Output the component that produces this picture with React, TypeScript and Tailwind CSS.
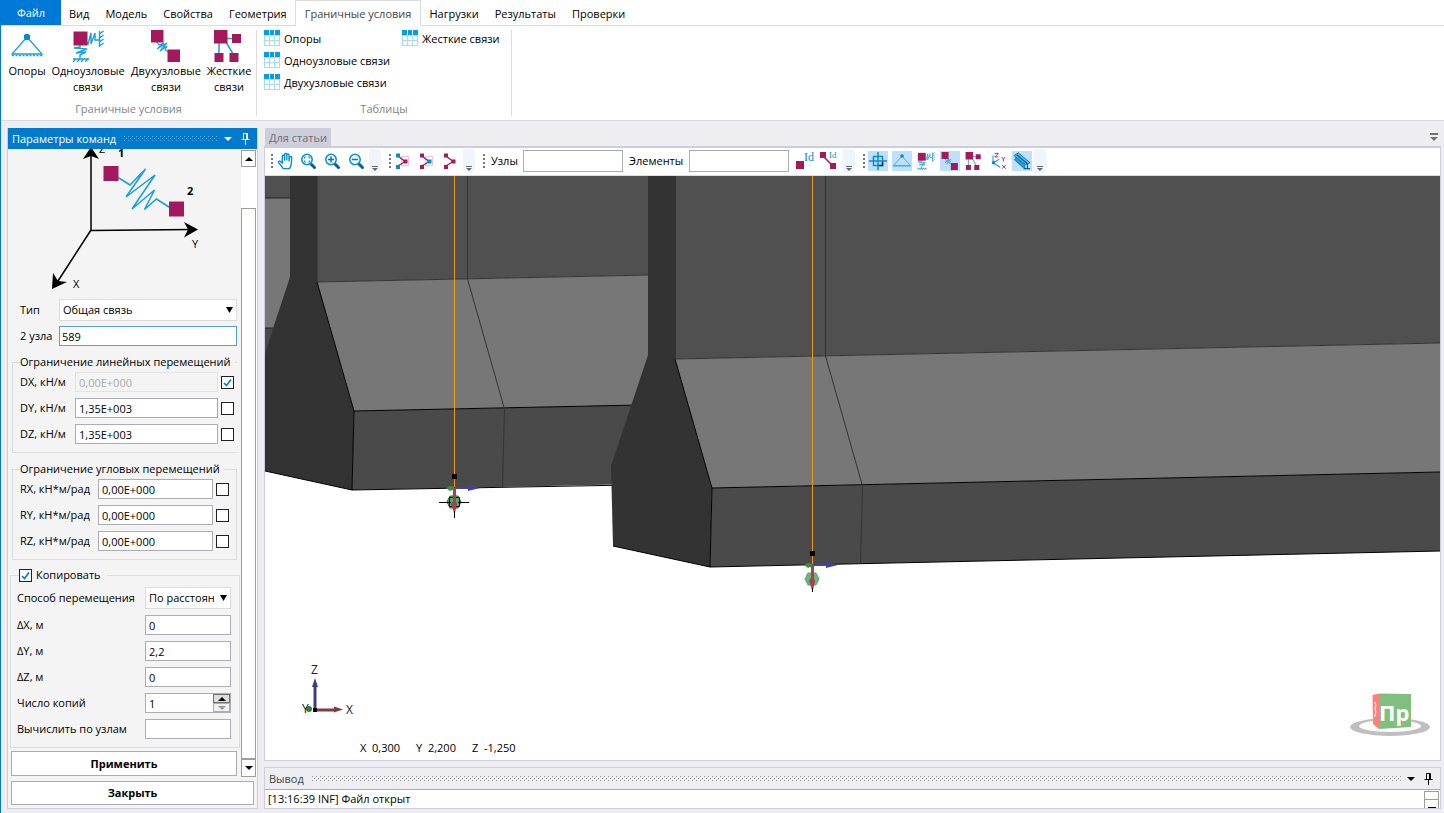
import { useState, type ReactNode } from 'react'
import clsx from 'clsx'

const MENU = ['Вид', 'Модель', 'Свойства', 'Геометрия', 'Граничные условия', 'Нагрузки', 'Результаты', 'Проверки']

export default function App() {
  const [tab, setTab] = useState('Граничные условия')

  return (
    <div className="flex h-screen flex-col overflow-hidden border-l border-[#0078d7] bg-[#eeeef2] font-['Open_Sans','Noto_Sans',sans-serif] text-[11px] leading-4 text-black">
      <nav className="flex h-[26px] shrink-0 border-b border-[#dadbdc] bg-white">
        <button className="h-[25px] w-[60px] bg-[#0078d7] text-white">Файл</button>
        {MENU.map((name) => (
          <button
            key={name}
            onClick={() => setTab(name)}
            className={clsx(
              'h-[26px] whitespace-nowrap pt-px',
              name === tab ? 'border border-b-0 border-[#dadbdc] bg-white px-[9px] text-[#444]' : 'px-2',
            )}
          >
            {name}
          </button>
        ))}
      </nav>

      <Ribbon />

      <div className="flex min-h-0 flex-1 gap-1.5 pb-1 pl-1.5 pr-[3px] pt-[7px]">
        <CommandPanel />
        <div className="flex min-w-0 flex-1 flex-col">
          <Workspace />
          <Output />
        </div>
      </div>
    </div>
  )
}

// ─── Ribbon ───────────────────────────────────────────────────────────────────

function Ribbon() {
  return (
    <section className="flex h-[95px] shrink-0 border-b border-[#dadbdc] bg-white pt-1">
      <div className="flex h-[86px] w-[256px] flex-col justify-between border-r border-[#dadbdc]">
        <div className="flex pl-[5px]">
          <BigButton width="w-[42px]" lines={['Опоры']} icon={<SupportIcon />} />
          <BigButton width="w-[80px]" lines={['Одноузловые', 'связи']} icon={<OneNodeIcon />} />
          <BigButton width="w-[76px]" lines={['Двухузловые', 'связи']} icon={<TwoNodeIcon />} />
          <BigButton width="w-[50px]" lines={['Жесткие', 'связи']} icon={<RigidIcon />} />
        </div>
        <GroupLabel>Граничные условия</GroupLabel>
      </div>
      <div className="flex h-[86px] w-[255px] flex-col justify-between border-r border-[#dadbdc]">
        <div className="flex gap-2 pl-[7px]">
          <div className="flex w-[130px] flex-col gap-1.5">
            <TableButton label="Опоры" />
            <TableButton label="Одноузловые связи" />
            <TableButton label="Двухузловые связи" />
          </div>
          <div>
            <TableButton label="Жесткие связи" />
          </div>
        </div>
        <GroupLabel>Таблицы</GroupLabel>
      </div>
    </section>
  )
}

function GroupLabel({ children }: { children: ReactNode }) {
  return <div className="text-center leading-[14px] text-[#848484]">{children}</div>
}

function BigButton({ lines, icon, width }: { lines: string[]; icon: ReactNode; width: string }) {
  return (
    <button className={clsx('flex flex-col items-center', width)}>
      <span className="block size-8">{icon}</span>
      {lines.map((l) => (
        <span key={l} className="whitespace-nowrap pt-px leading-[15px]">
          {l}
        </span>
      ))}
    </button>
  )
}

function TableButton({ label }: { label: string }) {
  return (
    <button className="flex h-4 items-center gap-1 whitespace-nowrap">
      <svg viewBox="0 0 16 16" className="size-4 shrink-0">
        <path d="M0 5h16v11H0z" fill="#a5dcf6" />
        <path d="M1 6h4v4H1zM6 6h4v4H6zM11 6h4v4h-4zM1 11h4v4H1zM6 11h4v4H6zM11 11h4v4h-4z" fill="#fff" />
        <path d="M0 0h5v5H0zM6 0h4v5H6zM11 0h5v5h-5z" fill="#049fe3" />
      </svg>
      <span className="pt-0.5">{label}</span>
    </button>
  )
}

// ─── Icons ────────────────────────────────────────────────────────────────────

function SupportIcon() {
  return (
    <svg viewBox="0 0 32 32" className="size-full" fill="none" stroke="#1a9fe0">
      <path d="M16 7L1 24h30z" strokeWidth="1.300" />
      <path d="M1 25.500h30" strokeWidth="1.500" strokeDasharray="2 1.500" />
      <circle cx="16" cy="7" r="3.200" fill="#0a86c8" stroke="none" />
    </svg>
  )
}

function OneNodeIcon() {
  return (
    <svg viewBox="0 0 32 32" className="size-full" fill="none" stroke="#1a9fe0" strokeWidth="1.400">
      <path d="M15 12l1 2 3-11v11l4-11v7h4M27.500 1v16M27.500 4l4-3M27.500 8l4-3M27.500 12l4-3M27.500 16l4-3" />
      <path d="M8 15v2l-6 1 13 1-11 4 10-1-6 3v4M1 29h16M1 32l3-3M5 32l3-3M9 32l3-3M13 32l3-3" />
      <path d="M1.500 1.500h14v14h-14z" fill="#a3195b" stroke="none" />
    </svg>
  )
}

function TwoNodeIcon() {
  return (
    <svg viewBox="0 0 32 32" className="size-full" fill="none">
      <path d="M7 12l2 3 5-2-7 6 10-6-7 8 7-5-2 4 4 2" stroke="#1a9fe0" strokeWidth="1.200" />
      <path d="M1 0h12.500v12.500H1zM17.500 19.500H30V32H17.500z" fill="#a3195b" />
    </svg>
  )
}

function RigidIcon() {
  return (
    <svg viewBox="0 0 32 32" className="size-full" fill="none">
      <path d="M6 13v11M13 8.500h8M13 12l7 12" stroke="#1a9fe0" strokeWidth="1.500" />
      <path d="M1 0h13.500v13.500H1zM19 4h9v9h-9zM1.500 23h9v9h-9zM16.500 23h9v9h-9z" fill="#a3195b" />
    </svg>
  )
}

function HandIcon() {
  return (
    <svg viewBox="0 0 20 20" className="size-full" fill="#fff" stroke="#078bd0" strokeWidth="1.500" strokeLinejoin="round">
      <path d="M8 18.500c-1-2-3-4-5-6.500-1-1.500 1-2.500 2-1.500l2 2V5c0-1.800 2.500-1.800 2.500 0v4-6c0-1.800 2.500-1.800 2.500 0v6-5.500c0-1.800 2.500-1.800 2.500 0V10l.6-4c.2-1.700 2.400-1.400 2.400.2L17 13c-.3 2.500-1 4-2 5.500z" />
    </svg>
  )
}

function ZoomIcon({ kind }: { kind: 'fit' | 'in' | 'out' }) {
  return (
    <svg viewBox="0 0 18 18" className="size-full" fill="none">
      <path d="M11 12l3.500 3.500" stroke="#085fa5" strokeWidth="3" strokeLinecap="round" />
      <circle cx="7" cy="7.500" r="5.200" fill="#fff" stroke="#0d95d8" strokeWidth="1.600" />
      {kind === 'fit' && <path d="M4.500 6.500V5H6M8 5h1.500v1.500M9.500 8.500V10H8M6 10H4.500V8.500" stroke="#0d95d8" />}
      {kind !== 'fit' && <path d="M4 7.500h6" stroke="#0878be" strokeWidth="1.600" />}
      {kind === 'in' && <path d="M7 4.500v6" stroke="#0878be" strokeWidth="1.600" />}
    </svg>
  )
}

function SelectIcon({ colors }: { colors: [string, string, string] }) {
  const [top, mid, bottom] = colors
  return (
    <svg viewBox="0 0 18 18" className="size-full" fill="none">
      <path d="M7.500 4.500h7v9h-7z" stroke="#d48bae" strokeDasharray="1 1" />
      <path d="M4 4l7 5.500L4 14" stroke="#a3195b" strokeWidth="1.300" />
      <path d="M2 1.500h4v4H2z" fill={top} />
      <path d="M9.500 7.500h4v4h-4z" fill={mid} />
      <path d="M2 13h4v4H2z" fill={bottom} />
    </svg>
  )
}

function AxesIcon() {
  return (
    <svg viewBox="0 0 20 20" className="size-full" fill="none">
      <path d="M4.500 4v8l8 5M4.500 12l7-4" stroke="#1a9fe0" strokeWidth="1.200" />
      <circle cx="5" cy="12" r="2" fill="#078bd0" />
      <path d="M6.500 1.500h4l-4 4h4M14 5.500l2 2.500 2-2.500M16 8v2.500M14.500 14.500l4 4M18.500 14.500l-4 4" stroke="#a3195b" />
    </svg>
  )
}

function BeamIcon() {
  return (
    <svg viewBox="0 0 20 20" className="size-full" fill="none">
      <path d="M1 4l5-3 13 11-5 2z" fill="#5cb8ea" stroke="#0775b5" />
      <path d="M3 6v3l10 9v-4zM1 8l11 10" fill="#2da4e0" stroke="#0775b5" />
      <path d="M4 3l12 10M16 13v5M12 18.500h7" stroke="#0a5f9b" strokeWidth="1.300" />
    </svg>
  )
}

function PinIcon() {
  return (
    <svg viewBox="0 0 9 12" className="h-3 w-[9px]" fill="none" stroke="currentColor">
      <path d="M2.500 .5h4v6h-4zM5.500 1v5M.5 6.500h8M4.500 7v5" />
    </svg>
  )
}

function Triangle({ up }: { up?: boolean }) {
  return (
    <svg viewBox="0 0 8 4" className="h-1 w-2" fill="currentColor">
      <path d={up ? 'M0 4l4-4 4 4z' : 'M0 0h8L4 4z'} />
    </svg>
  )
}

function DotStrip({ id, color }: { id: string; color: string }) {
  return (
    <svg className="h-[6px] min-w-0 flex-1">
      <pattern id={id} width="4" height="4" patternUnits="userSpaceOnUse">
        <path d="M0 0h1v1H0zM2 2h1v1H2z" fill={color} />
      </pattern>
      <rect width="100%" height="100%" fill={`url(#${id})`} />
    </svg>
  )
}

// ─── Command parameters ───────────────────────────────────────────────────────

function CommandPanel() {
  return (
    <aside className="flex w-[251px] shrink-0 flex-col border border-t-0 border-[#cccedb] bg-[#f4f4f4]">
      <header className="flex h-[21px] shrink-0 items-center bg-[#007acc] pl-1 pr-[7px] text-white">
        <h2 className="mr-2">Параметры команд</h2>
        <DotStrip id="dots-title" color="#59a8de" />
        <button aria-label="Меню панели" className="ml-1.5 mr-[9px]">
          <Triangle />
        </button>
        <button aria-label="Закрепить">
          <PinIcon />
        </button>
      </header>

      <div className="flex min-h-0 flex-1">
        <form className="min-w-0 flex-1 overflow-hidden" onSubmit={(e) => e.preventDefault()}>
          <SpringDiagram />
          <div className="flex flex-col gap-[5px] pl-3 pr-1">
            <div className="flex h-[22px] items-center">
              <label htmlFor="type" className="w-[39px]">Тип</label>
              <Select id="type" options={['Общая связь']} />
            </div>
            <div className="flex h-5 items-center">
              <label htmlFor="nodes2" className="w-[39px] whitespace-nowrap">2 узла</label>
              <input
                id="nodes2"
                defaultValue="589"
                className="h-5 min-w-0 flex-1 border border-[#569de5] bg-white px-0.5 outline-none"
              />
            </div>
          </div>

          <Group title="Ограничение линейных перемещений" open>
            <Stiffness id="dx" label="DX, кН/м" value="0,00E+000" fixed />
            <Stiffness id="dy" label="DY, кН/м" value="1,35E+003" />
            <Stiffness id="dz" label="DZ, кН/м" value="1,35E+003" />
          </Group>
          <Group title="Ограничение угловых перемещений">
            <Stiffness id="rx" label="RX, кН*м/рад" value="0,00E+000" angular />
            <Stiffness id="ry" label="RY, кН*м/рад" value="0,00E+000" angular />
            <Stiffness id="rz" label="RZ, кН*м/рад" value="0,00E+000" angular />
          </Group>

          <fieldset className="ml-0.5 mr-px mt-[7px] min-w-0 border border-[#dcdcdc] pb-2 pl-1.5 pr-2">
            <legend className="ml-0.5 h-4 pr-1.5">
              <label className="flex items-center gap-1">
                <Check label="Копировать" checked />
                Копировать
              </label>
            </legend>
            <div className="flex flex-col gap-1.5 pt-1">
              <CopyRow id="method" label="Способ перемещения">
                <Select id="method" options={['По расстоянию']} />
              </CopyRow>
              <CopyRow id="cx" label="ΔX, м">
                <TextBox id="cx" value="0" />
              </CopyRow>
              <CopyRow id="cy" label="ΔY, м">
                <TextBox id="cy" value="2,2" />
              </CopyRow>
              <CopyRow id="cz" label="ΔZ, м">
                <TextBox id="cz" value="0" />
              </CopyRow>
              <CopyRow id="count" label="Число копий">
                <TextBox id="count" value="1" />
                <span className="absolute right-px top-px flex h-[18px] w-[17px] flex-col">
                  <button aria-label="Больше" className="flex flex-1 items-center justify-center border border-[#707070] bg-[#ddd]">
                    <Triangle up />
                  </button>
                  <button aria-label="Меньше" disabled className="flex flex-1 items-center justify-center border border-[#adadad] bg-[#f0f0f0] text-[#999]">
                    <Triangle />
                  </button>
                </span>
              </CopyRow>
              <CopyRow id="calc" label="Вычислить по узлам">
                <TextBox id="calc" value="" />
              </CopyRow>
            </div>
          </fieldset>
          <div className="pl-[3px] pr-1 pt-[3px]">
            <button className="h-[25px] w-full border border-[#acacac] bg-white font-bold">Применить</button>
          </div>
        </form>

        <div className="flex w-4 shrink-0 flex-col border-r border-white bg-white pt-px">
          <button aria-label="Вверх" className="flex h-[17px] items-center justify-center border border-[#a09d92]">
            <Triangle up />
          </button>
          <div className="h-[41px]" />
          <div className="flex-1 border border-[#a09d92]" />
          <button aria-label="Вниз" className="flex h-[18px] items-center justify-center border border-[#a09d92]">
            <Triangle />
          </button>
        </div>
      </div>

      <div className="px-[3px] pb-[3px] pt-1">
        <button className="h-6 w-full border border-[#acacac] bg-white font-bold">Закрыть</button>
      </div>
    </aside>
  )
}

function SpringDiagram() {
  return (
    <svg viewBox="8 149 233 150" className="block h-[150px] w-full">
      <path d="M91 230.500V152M91 230.500l100-1M91 230L58 281" stroke="#000" strokeWidth="1.500" fill="none" />
      <path d="M91 147l8 12-8-3-8 3zM198 229.500l-14 8 4-8-4-7.500zM52 289l1-16 5 8 9 1z" />
      <path d="M118 177.500l12 7.500 15.500-16-19.500 28 29-22-23 34 22.500-19-10 19.500 12-10.500 14 9" stroke="#139fe0" strokeWidth="1.500" fill="none" />
      <path d="M103.500 166h15v15h-15zM169 201.500h15v15h-15z" fill="#a3195b" />
      <g className="text-[11px]">
        <text x="99" y="153">Z</text>
        <text x="118" y="157" className="font-bold">1</text>
        <text x="187" y="195" className="font-bold">2</text>
        <text x="192" y="248">Y</text>
        <text x="73" y="288">X</text>
      </g>
    </svg>
  )
}

function Group({ title, open, children }: { title: string; open?: boolean; children: ReactNode }) {
  return (
    <fieldset className={clsx('mx-1 mt-2 min-w-0 border border-[#dcdcdc] pb-2 pl-[7px]', open && 'border-r-0')}>
      <legend className="h-4 whitespace-nowrap pr-1">{title}</legend>
      <div className="flex flex-col gap-1.5 pt-0.5">{children}</div>
    </fieldset>
  )
}

function Stiffness({ id, label, value, fixed, angular }: {
  id: string
  label: string
  value: string
  fixed?: boolean
  angular?: boolean
}) {
  return (
    <div className="flex h-5 items-center">
      <label htmlFor={id} className={clsx('whitespace-nowrap', angular ? 'w-[78px]' : 'w-[55px]')}>
        {label}
      </label>
      <input
        id={id}
        defaultValue={value}
        disabled={fixed}
        className={clsx(
          'mr-[3px] h-5 border px-[3px]',
          angular ? 'w-[115px]' : 'w-[143px]',
          fixed ? 'border-[#e3e3e3] bg-transparent text-[#aaa]' : 'border-[#abadb3] bg-white',
        )}
      />
      <Check label={`Закрепить ${label}`} checked={fixed} />
    </div>
  )
}

function Check({ label, checked }: { label: string; checked?: boolean }) {
  return (
    <span className="relative block size-[13px]">
      <input
        type="checkbox"
        aria-label={label}
        defaultChecked={checked}
        className="peer block size-[13px] appearance-none border border-[#222] bg-white"
      />
      <svg viewBox="0 0 13 13" className="pointer-events-none absolute inset-0 hidden peer-checked:block" fill="none">
        <path d="M3 7l2.500 2.500L10 3.500" stroke="#0078d7" strokeWidth="1.600" />
      </svg>
    </span>
  )
}

function CopyRow({ id, label, children }: { id: string; label: string; children: ReactNode }) {
  return (
    <div className="flex items-center">
      <label htmlFor={id} className="min-w-0 flex-1 whitespace-nowrap">{label}</label>
      <div className="relative flex w-[86px] shrink-0">{children}</div>
    </div>
  )
}

function TextBox({ id, value }: { id: string; value: string }) {
  return <input id={id} defaultValue={value} className="h-5 w-full border border-[#abadb3] bg-white px-[3px]" />
}

function Select({ id, options }: { id: string; options: string[] }) {
  return (
    <span className="relative block h-[22px] min-w-0 flex-1">
      <select id={id} className="h-[22px] w-full appearance-none border border-[#dcdcdc] bg-white pl-[3px] pr-4">
        {options.map((o) => (
          <option key={o}>{o}</option>
        ))}
      </select>
      <svg viewBox="0 0 7 6" className="pointer-events-none absolute right-1 top-2 h-1.5 w-[7px]">
        <path d="M0 0h7L3.500 6z" />
      </svg>
    </span>
  )
}

// ─── Model workspace ──────────────────────────────────────────────────────────

function Workspace() {
  return (
    <>
      <div className="flex h-[18px] shrink-0 items-center justify-between pr-[3px]">
        <button className="ml-px h-[18px] bg-[#cccedb] px-1 pt-0.5 leading-4 text-[#6d6d70]">Для статьи</button>
        <button aria-label="Список документов" className="flex flex-col gap-0.5 text-[#717171]">
          <span className="block h-0.5 w-2 bg-current" />
          <Triangle />
        </button>
      </div>
      <main className="flex min-h-0 flex-1 flex-col border border-t-2 border-[#cccedb] bg-white">
        <Toolbar />
        <div className="relative min-h-0 flex-1 overflow-hidden">
          <Scene />
          <div className="absolute bottom-1 left-[95px] flex gap-4 whitespace-nowrap">
            <span>X&nbsp; 0,300</span>
            <span>Y&nbsp; 2,200</span>
            <span>Z&nbsp; -1,250</span>
          </div>
        </div>
      </main>
    </>
  )
}

function Toolbar() {
  return (
    <div className="flex h-7 shrink-0 items-center gap-2 border-b border-[#ddd] pb-0.5 pl-1.5">
      <div className="flex items-center">
        <Grip />
        <div className="flex gap-1">
          <Tool label="Сдвиг"><HandIcon /></Tool>
          <Tool label="Показать все"><ZoomIcon kind="fit" /></Tool>
          <Tool label="Увеличить"><ZoomIcon kind="in" /></Tool>
          <Tool label="Уменьшить"><ZoomIcon kind="out" /></Tool>
        </div>
        <Overflow />
      </div>
      <div className="flex items-center">
        <Grip />
        <div className="flex gap-1">
          <Tool label="Выбор узлов"><SelectIcon colors={['#078bd0', '#a3195b', '#078bd0']} /></Tool>
          <Tool label="Выбор элементов"><SelectIcon colors={['#a3195b', '#078bd0', '#a3195b']} /></Tool>
          <Tool label="Выбор всего">
            <svg viewBox="0 0 18 18" className="size-full" fill="none">
              <path d="M4 4l7 5.500L4 14" stroke="#a3195b" strokeWidth="1.300" />
              <path d="M2 1.500h4v4H2zM9.500 7.500h4v4h-4zM2 13h4v4H2z" fill="#a3195b" />
            </svg>
          </Tool>
        </div>
        <Overflow />
      </div>
      <div className="flex items-center">
        <Grip />
        <label htmlFor="find-nodes" className="w-9 pl-1">Узлы</label>
        <input id="find-nodes" className="mr-1.5 h-[22px] w-[100px] border border-[#abadb3] px-1" />
        <label htmlFor="find-elements" className="w-[60px]">Элементы</label>
        <input id="find-elements" className="mr-1 h-[22px] w-[100px] border border-[#abadb3] px-1" />
        <div className="mr-1 flex gap-1">
          <Tool label="Номера узлов">
            <svg viewBox="0 0 18 18" className="size-full overflow-visible">
              <path d="M2 9h8v8H2z" fill="#a3195b" />
              <text x="10" y="9" fill="#078bd0" className="font-['Liberation_Serif',serif] text-[12px]">Id</text>
            </svg>
          </Tool>
          <Tool label="Номера элементов">
            <svg viewBox="0 0 18 18" className="size-full overflow-visible">
              <path d="M5 4l9 9" stroke="#a3195b" strokeWidth="1.500" />
              <path d="M2 0h6v6H2zM12 11h6v6h-6z" fill="#a3195b" />
              <text x="11" y="6" fill="#078bd0" className="font-['Liberation_Serif',serif] text-[9px]">Id</text>
            </svg>
          </Tool>
        </div>
        <Overflow />
      </div>
      <div className="flex items-center">
        <Grip />
        <div className="flex gap-1 pl-px">
          <Tool label="Узлы" active>
            <svg viewBox="0 0 18 18" className="size-full" fill="none" stroke="#078bd0" strokeWidth="1.500">
              <path d="M4.500 4.500h9v9h-9zM9 0v18M0 9h18" />
              <path d="M13.500 10v3.500H10" stroke="#1b2e6b" />
            </svg>
          </Tool>
          <Tool label="Опоры" active><SupportIcon /></Tool>
          <Tool label="Одноузловые связи"><OneNodeIcon /></Tool>
          <Tool label="Двухузловые связи" active><TwoNodeIcon /></Tool>
          <Tool label="Жесткие связи"><RigidIcon /></Tool>
          <Tool label="Локальные оси"><AxesIcon /></Tool>
          <Tool label="Сечения" active><BeamIcon /></Tool>
        </div>
        <Overflow />
      </div>
    </div>
  )
}

function Grip() {
  return (
    <svg viewBox="0 0 2 14" className="mr-0.5 h-[14px] w-0.5 shrink-0" fill="#777">
      <path d="M0 0h2v2H0zM0 4h2v2H0zM0 8h2v2H0zM0 12h2v2H0z" />
    </svg>
  )
}

function Tool({ label, active, children }: { label: string; active?: boolean; children: ReactNode }) {
  return (
    <button aria-label={label} aria-pressed={active} className={clsx('size-5 shrink-0 p-px', active && 'bg-[#bfe0fd]')}>
      {children}
    </button>
  )
}

function Overflow() {
  return (
    <button aria-label="Параметры панели" className="ml-0.5 flex h-6 w-3 shrink-0 flex-col items-center justify-end gap-px rounded-r-sm bg-[#eef5fd] pb-0.5 text-[#666]">
      <span className="block h-px w-1.5 bg-current" />
      <svg viewBox="0 0 6 3" className="h-[3px] w-1.5" fill="currentColor">
        <path d="M0 0h6L3 3z" />
      </svg>
    </button>
  )
}

function Scene() {
  return (
    <svg viewBox="265 176 1175 584" preserveAspectRatio="xMinYMin slice" className="block size-full">
      {/* far beam */}
      <path d="M265 176h26v102l-26 75z" fill="#505050" />
      <path d="M265 198h26v80l-18 50h-8z" fill="#777" />
      <path d="M265 328h9l-9 26z" fill="#4a4a4a" />
      <path d="M265 198h25M265 328h8" stroke="#222" />

      {/* middle beam, runs on behind the near one */}
      <path d="M317 176h333v99l-333 7z" fill="#505050" />
      <path d="M317 282l333-7v130l-296 6z" fill="#777" />
      <path d="M354 411l286-6v79l-288 6z" fill="#4a4a4a" />
      <path d="M290 176h27v106l37 129-2 79-87-19V353l25-76z" fill="#333" />
      <path d="M317 282l37 129-2 79M354 411l286-6M352 490l280-5M265 471l87 19" stroke="#000" fill="none" />
      <path d="M317 176v106l333-7M467.500 176v103l37 130-2 78" stroke="#333" fill="none" />

      {/* near beam */}
      <path d="M675 176h765v167l-765 16z" fill="#505050" />
      <path d="M675 359l765-16v129l-728 16z" fill="#777" />
      <path d="M712 488l728-16v79l-730 16z" fill="#4a4a4a" />
      <path d="M648 176h27v183l37 129-2 79-97-21-2-80 37-111z" fill="#333" />
      <path d="M675 359l37 129-2 79M712 488l728-16M710 567l730-16M613 546l97 21" stroke="#000" fill="none" />
      <path d="M675.500 176v183l764.500-16M825.500 176v180l37 130-2 78" stroke="#333" fill="none" />

      <Node x={454} y={488} selected />
      <Node x={812} y={565} />

      {/* axes */}
      <g>
        <path d="M315 709v-24" stroke="#403c80" strokeWidth="3" />
        <path d="M315 678l3 9h-6z" fill="#403c80" />
        <path d="M316 710h20" stroke="#803c40" strokeWidth="3" />
        <path d="M343 709.500l-9 3v-6z" fill="#803c40" />
        <circle cx="309" cy="709" r="3" fill="#397c3b" />
        <path d="M313 708h4v4h-4z" />
        <g className="text-[12px]" fill="#222">
          <text x="311" y="674">Z</text>
          <text x="302" y="713">Y</text>
          <text x="346" y="714">X</text>
        </g>
      </g>

      {/* product logo */}
      <g>
        <path d="M1350 727a40 9 0 1 0 80 0a40 9 0 1 0-80 0zm9-1a31 6 0 1 1 62 0a31 6 0 1 1-62 0z" fill="#bfbfbf" fillRule="evenodd" />
        <path d="M1379 693.500l32 .5v33l-32 2z" fill="#7fbf7f" />
        <path d="M1372.500 695l6.500-1.500v35.500l-6-5z" fill="#ff7f7f" />
        <path d="M1374.500 702l1.500 3-1 4 1 3-1.500 5" stroke="#fff" fill="none" />
        <text x="1379" y="721" fill="#fff" className="text-[22px] font-bold">Пр</text>
      </g>
    </svg>
  )
}

function Node({ x, y, selected }: { x: number; y: number; selected?: boolean }) {
  return (
    <g transform={`translate(${x} ${y})`}>
      <path d={`M0 0V${176 - y}H1V0z`} fill="#f09a1c" />
      <path d="M-2-14h5v5h-5z" />
      <path d="M-8 0l4-2 5 1v2l-5 2z" fill="#3c9140" />
      <path d="M0-1h14v-2l12 3-12 3V1H0z" fill="#4340a8" />
      <path d="M-7 14l3-6h8l3 6-3 6h-8z" fill={selected ? '#48b070' : '#6fb380'} stroke={selected ? '#2a6b44' : '#5ba06c'} />
      {selected && <path d="M-15 14.500H-3M4 14.500h11M.5 25v5M-4.500 9.500h10v9h-10z" stroke="#000" fill="none" />}
      <path d="M-1 0h3v13l1 3-2 9h-1l-3-9 2-3z" fill="#a5434b" />
      <path d="M.5 23v4" stroke="#000" />
    </g>
  )
}

// ─── Output ───────────────────────────────────────────────────────────────────

function Output() {
  return (
    <section className="mt-1.5 flex h-[42px] shrink-0 flex-col border border-[#cccedb]">
      <header className="flex h-[21px] items-center pl-1 pr-[7px]">
        <h2 className="mr-2 text-[#444]">Вывод</h2>
        <DotStrip id="dots-output" color="#999" />
        <button aria-label="Меню вывода" className="ml-1.5 mr-[9px]">
          <Triangle />
        </button>
        <button aria-label="Закрепить вывод">
          <PinIcon />
        </button>
      </header>
      <div className="flex flex-1 items-center justify-between border-t border-[#acacac] bg-white pl-[3px] pr-px">
        <p>[13:16:39 INF] Файл открыт</p>
        <div className="mt-px flex h-[17px] w-[15px] flex-col border border-b-0 border-[#a09d92]">
          <button aria-label="Прокрутить вверх" className="h-2 border-b border-[#a09d92]" />
          <button aria-label="Прокрутить вниз" className="flex flex-1 items-end justify-center">
            <span className="block h-px w-2 bg-black" />
          </button>
        </div>
      </div>
    </section>
  )
}
